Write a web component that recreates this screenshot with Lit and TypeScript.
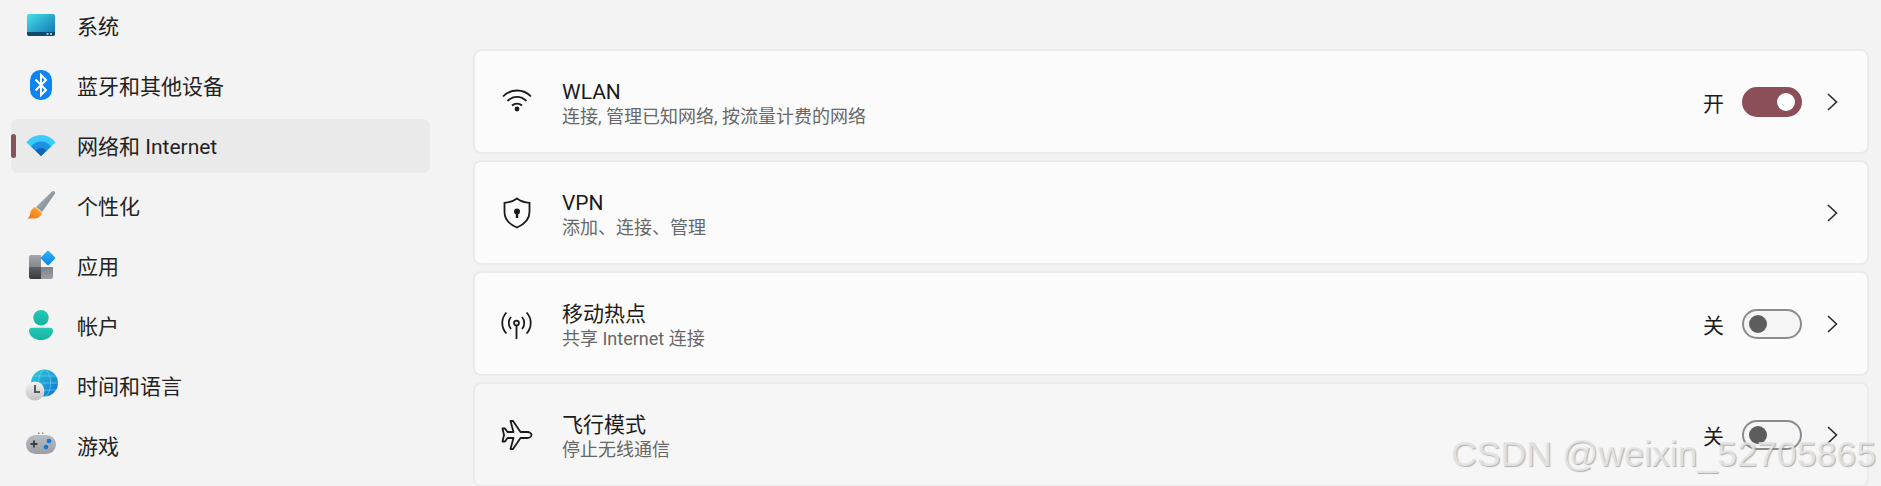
import { LitElement, html, css, svg } from "lit";
import { customElement } from "lit/decorators.js";

const sideIcons: Record<string, unknown> = {
  system: svg`<defs><linearGradient id="s1" x1="0" y1="0" x2="1" y2="1"><stop offset="0" stop-color="#45e0e6"/><stop offset="1" stop-color="#0f6fb4"/></linearGradient></defs>
    <rect x="2" y="4" width="28" height="22" rx="2" fill="url(#s1)"/><path d="M2 22h28v2a2 2 0 0 1-2 2H4a2 2 0 0 1-2-2z" fill="#0e4a6e"/>
    <rect x="21.5" y="23" width="2" height="2" fill="#9cc3d6"/><rect x="25" y="23" width="2" height="2" fill="#9cc3d6"/>`,
  bt: svg`<rect x="5" y="0" width="22" height="30" rx="10.5" fill="#0a84f7"/>
    <path d="M10.5 9.5 21 20l-5 5V5l5 5-10.5 10.5" fill="none" stroke="#fff" stroke-width="2"/>`,
  wifi: svg`<path d="M1.5 12.5C5 7.8 10.200 5 16 5s11 2.800 14.500 7.500L16 26z" fill="#3bcbf9"/>
    <path d="M6 16.500C8.500 13.400 12 11.500 16 11.500s7.500 1.900 10 5L16 26z" fill="#1c90e2"/>
    <path d="M10.500 20.500C12 19 13.900 18 16 18s4 1 5.500 2.500L16 26z" fill="#0f62b4"/>`,
  brush: svg`<defs><linearGradient id="b1" x1="0" y1="0" x2="1" y2="1"><stop offset="0" stop-color="#b9bec3"/><stop offset="1" stop-color="#6f7a84"/></linearGradient>
    <linearGradient id="b2" x1="1" y1="0" x2="0" y2="1"><stop offset="0" stop-color="#fbb02b"/><stop offset="1" stop-color="#f0701a"/></linearGradient></defs>
    <path d="M27 1.500c2-1 3.500 0 3 2L17 22l-6-5z" fill="url(#b1)"/>
    <path d="M10 17l7 6c-1 3.500-4 5.500-8 5.500H2c3-1.500 3-4 3.500-6.500C6 20 8 18 10 17z" fill="url(#b2)"/>`,
  apps: svg`<defs><linearGradient id="a1" x1="0" y1="0" x2="0" y2="1"><stop offset="0" stop-color="#a3a7ac"/><stop offset="1" stop-color="#85898e"/></linearGradient>
    <linearGradient id="a2" x1="0" y1="0" x2="0" y2="1"><stop offset="0" stop-color="#5e6165"/><stop offset="1" stop-color="#37393c"/></linearGradient>
    <linearGradient id="a3" x1="0" y1="0" x2="0" y2="1"><stop offset="0" stop-color="#7e8287"/><stop offset="1" stop-color="#9c9fa3"/></linearGradient>
    <linearGradient id="a4" x1="0" y1="0" x2="1" y2="1"><stop offset="0" stop-color="#2fb4f5"/><stop offset="1" stop-color="#0c84e6"/></linearGradient></defs>
    <path d="M6 5h10v12H4V7a2 2 0 0 1 2-2z" fill="url(#a1)"/><path d="M4 17h12v12H6a2 2 0 0 1-2-2z" fill="url(#a2)"/><path d="M16 17h12v10a2 2 0 0 1-2 2H16z" fill="url(#a3)"/>
    <rect x="17.500" y="2.500" width="11" height="11" rx="1.500" transform="rotate(45 23 8)" fill="url(#a4)"/>`,
  user: svg`<defs><linearGradient id="u1" x1="0" y1="0" x2="0" y2="1"><stop offset="0" stop-color="#25c9b4"/><stop offset="1" stop-color="#14b2a2"/></linearGradient></defs>
    <circle cx="16" cy="7.700" r="7.700" fill="url(#u1)"/><path d="M7 17.700h18a3 3 0 0 1 3 3c0 5.500-6 9.300-12 9.300S4 26.200 4 20.700a3 3 0 0 1 3-3z" fill="url(#u1)"/>`,
  globe: svg`<defs><linearGradient id="g1" x1="0" y1="0" x2="1" y2="1"><stop offset="0" stop-color="#2fd0dc"/><stop offset="1" stop-color="#0c6fd0"/></linearGradient>
    <linearGradient id="g2" x1="0" y1="0" x2="0" y2="1"><stop offset="0" stop-color="#f4f4f4"/><stop offset="1" stop-color="#bfc0c2"/></linearGradient></defs>
    <circle cx="19.500" cy="13" r="13.500" fill="url(#g1)"/>
    <g fill="none" stroke="#7fdcec" stroke-opacity=".55" stroke-width="1"><ellipse cx="19.500" cy="13" rx="6" ry="13.500"/><path d="M6 13h27M8 6h23M8 20h23"/></g>
    <circle cx="10" cy="21" r="9.500" fill="url(#g2)"/><path d="M10 15v7h5" fill="none" stroke="#55585c" stroke-width="2"/>`,
  game: svg`<defs><linearGradient id="p1" x1="0" y1="0" x2="0" y2="1"><stop offset="0" stop-color="#b9bcc1"/><stop offset="1" stop-color="#9a9da3"/></linearGradient></defs>
    <rect x="1" y="5" width="30" height="19" rx="9.500" fill="url(#p1)"/>
    <path d="M9 10.500v7M5.500 14h7" stroke="#3f4144" stroke-width="2"/>
    <circle cx="24" cy="11" r="2.300" fill="#0f78d8"/><circle cx="21" cy="17" r="2.300" fill="#0f78d8"/>
    <rect x="13" y="2.500" width="1.500" height="1.500" fill="#8b8d90"/><rect x="17" y="2.500" width="1.500" height="1.500" fill="#8b8d90"/>`,
};

const cardIcons: Record<string, unknown> = {
  wifi: svg`<circle cx="16" cy="23" r="2.400" fill="#1b1b1b" stroke="none"/><path d="M2 10.500C9.500 2.500 22.500 2.500 30 10.500M6.500 15C12 9.500 20 9.500 25.500 15M11 19.500c2.800-2.600 7.200-2.600 10 0"/>`,
  shield: svg`<path d="M16 1.500c3.500 2.700 7.500 4 12.500 4.300V15c0 7.500-5.500 12.500-12.500 15.500C9 27.500 3.500 22.500 3.500 15V5.800C8.500 5.500 12.500 4.200 16 1.500z"/><circle cx="16" cy="14.500" r="3" fill="#1b1b1b" stroke="none"/><path d="M16 15v6" stroke-width="2.400"/>`,
  hotspot: svg`<circle cx="15.500" cy="15" r="2.400"/><path d="M15.500 17.500V31M10 21c-3-3.400-3-8.600 0-12M21 9c3 3.400 3 8.600 0 12M5.400 25.500c-5.500-6-5.500-15 0-21M25.600 4.500c5.500 6 5.500 15 0 21"/>`,
  plane: svg`<path d="M30.500 16c0-1.700-2-3-4-3h-7L12 2H9.500l3 11H6.500L4 9.500H1.500L3 16l-1.500 6.500H4L6.500 19h6l-3 11H12l7.500-11h7c2 0 4-1.300 4-3z" stroke-linejoin="round"/>`,
};

const nav = [
  ["system", "系统"], ["bt", "蓝牙和其他设备"], ["wifi", "网络和 Internet"], ["brush", "个性化"],
  ["apps", "应用"], ["user", "帐户"], ["globe", "时间和语言"], ["game", "游戏"],
];

const cards = [
  { icon: "wifi", title: "WLAN", sub: "连接, 管理已知网络, 按流量计费的网络", state: "开", on: true },
  { icon: "shield", title: "VPN", sub: "添加、连接、管理" },
  { icon: "hotspot", title: "移动热点", sub: "共享 Internet 连接", state: "关", on: false },
  { icon: "plane", title: "飞行模式", sub: "停止无线通信", state: "关", on: false, hover: true },
];

@customElement("app-root")
export class AppRoot extends LitElement {
  static styles = css`
    :host {
      display: block;
      width: 1881px;
      height: 486px;
      overflow: hidden;
      position: relative;
      background: #f3f3f3;
      font-family: Roboto, "Noto Sans CJK SC", sans-serif;
      color: #1b1b1b;
    }
    .layout { display: flex; align-items: flex-start; }
    .side {
      width: 419px;
      margin: -1px 43px 0 11px;
      display: flex;
      flex-direction: column;
      gap: 6px;
      flex: none;
    }
    .item {
      position: relative;
      height: 54px;
      display: flex;
      align-items: center;
      gap: 20px;
      padding-left: 14px;
      border-radius: 7px;
      font-size: 21px;
      color: #222;
    }
    .item.active { background: #eaeaea; }
    .label { margin-top: -2px; }
    .bar {
      position: absolute;
      left: 0;
      top: 15px;
      width: 5px;
      height: 24px;
      border-radius: 3px;
      background: #8a4f58;
    }
    .side-icon { width: 32px; height: 32px; flex: none; overflow: visible; }
    .main {
      width: 1396px;
      padding-top: 49px;
      display: flex;
      flex-direction: column;
      gap: 6px;
      flex: none;
    }
    .card {
      box-sizing: border-box;
      height: 105px;
      flex: none;
      display: flex;
      align-items: center;
      padding: 0 29px 0 26px;
      background: #fbfbfb;
      border: 2px solid #ebebeb;
      border-radius: 8px;
    }
    .card.hover { background: #f6f6f6; }
    .card-icon {
      width: 32px;
      height: 32px;
      flex: none;
      fill: none;
      stroke: #1b1b1b;
      stroke-width: 1.8;
      margin-right: 29px;
    }
    .text { flex: 1; display: flex; flex-direction: column; margin-top: 5px; }
    .title { font-size: 21px; line-height: 25px; color: #1b1b1b; }
    .sub { font-size: 18px; line-height: 24px; color: #676767; }
    .state { font-size: 21px; margin-right: 18px; color: #1b1b1b; }
    .toggle {
      box-sizing: border-box;
      width: 60px;
      height: 30px;
      border-radius: 15px;
      display: flex;
      align-items: center;
      flex: none;
      padding: 0 5px;
      margin-right: 24px;
      background: #f5f5f5;
      border: 2px solid #8b8b8b;
    }
    .toggle.on {
      background: #8a4f58;
      border-color: #8a4f58;
      justify-content: flex-end;
    }
    .knob { width: 18px; height: 18px; border-radius: 50%; background: #5d5d5d; }
    .toggle.on .knob { background: #fff; }
    .chev { width: 12px; height: 20px; flex: none; fill: none; stroke: #2a2a2a; stroke-width: 1.600; }
    .mark {
      position: absolute;
      left: 1451px;
      top: 434px;
      font-family: "Liberation Sans", Arial, sans-serif;
      font-size: 35.700px;
      line-height: 40px;
      white-space: nowrap;
      color: rgba(232, 232, 232, 0.85);
      text-shadow: 1px 1px 1px rgba(120, 120, 120, 0.55);
    }
  `;

  render() {
    return html`
      <div class="layout">
        <nav class="side">
          ${nav.map(([k, label]) => html`
            <div class="item ${k === "wifi" ? "active" : ""}">
              ${k === "wifi" ? html`<span class="bar"></span>` : ""}
              <svg class="side-icon" viewBox="0 0 32 32">${sideIcons[k]}</svg>
              <span class="label">${label}</span>
            </div>`)}
        </nav>
        <main class="main">
          ${cards.map((c) => html`
            <section class="card ${c.hover ? "hover" : ""}">
              <svg class="card-icon" viewBox="0 0 32 32">${cardIcons[c.icon]}</svg>
              <div class="text">
                <div class="title">${c.title}</div>
                <div class="sub">${c.sub}</div>
              </div>
              ${c.state ? html`
                <span class="state">${c.state}</span>
                <span class="toggle ${c.on ? "on" : ""}"><span class="knob"></span></span>` : ""}
              <svg class="chev" viewBox="0 0 12 20"><path d="M2 2l8.500 8L2 18"/></svg>
            </section>`)}
        </main>
      </div>
      <div class="mark">CSDN @weixin_52705865</div>
    `;
  }
}
